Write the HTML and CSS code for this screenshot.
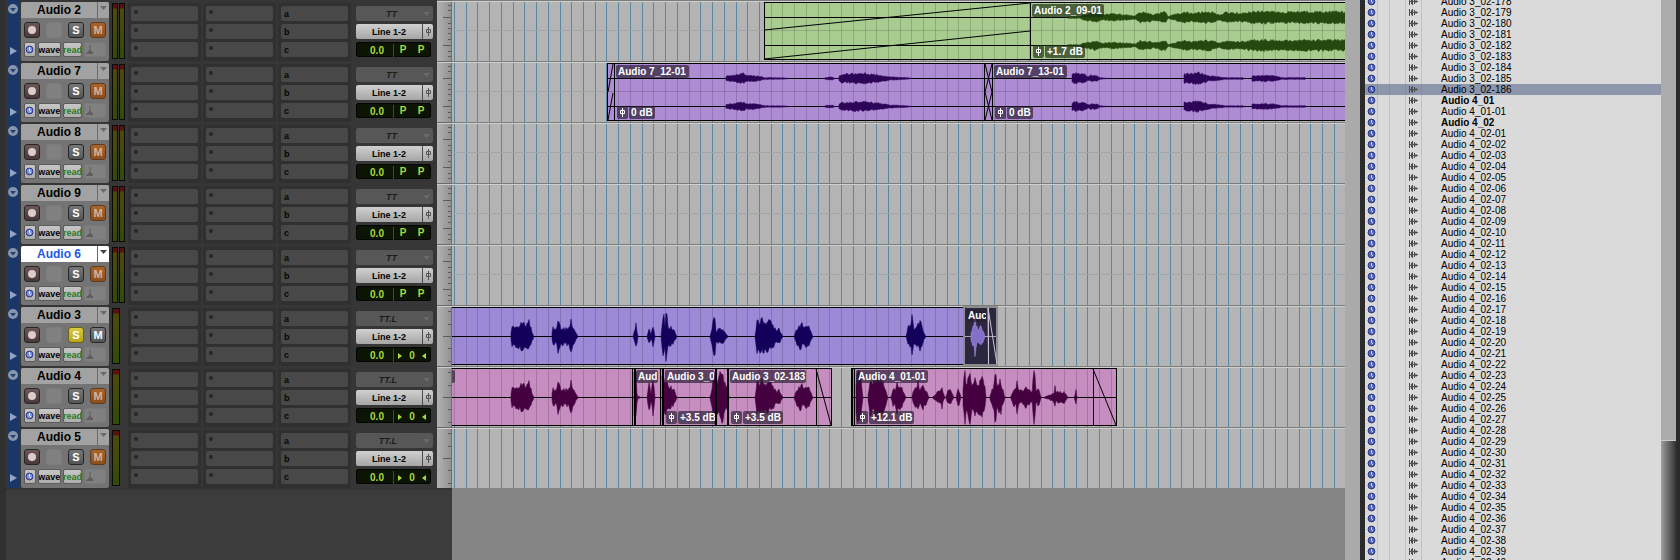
FILE: index.html
```html
<!DOCTYPE html>
<html lang="en">
<head>
<meta charset="utf-8">
<title>Edit window</title>
<link rel="stylesheet" href="styles.css">
</head>
<body>
<div class="app">
  <main class="editor" id="editor"></main>
  <div class="gutter"></div>
  <aside class="clips">
    <ul class="clip-list" id="clip-list"></ul>
    <div class="scroll"><div class="scroll-thumb"></div></div>
  </aside>
</div>
<script src="app.js"></script>
</body>
</html>
```

FILE: styles.css
```css
* { box-sizing: border-box; }
body {
  margin: 0;
  background: #3c3c3c;
  font-family: "Liberation Sans", Arial, sans-serif;
  font-size: 10px;
  color: #000;
}
button {
  font: inherit;
  color: inherit;
  padding: 0;
  border: 0;
  overflow: hidden;
  white-space: nowrap;
}
svg { display: block; flex: none; }
.app { display: flex; height: 100vh; overflow: hidden; }

.editor {
  flex: 1;
  min-width: 0;
  display: flex;
  flex-direction: column;
  border-left: 6px solid #303030;
  background: #3c3c3c;
}
.track { display: flex; flex: none; height: 61px; }
.rest { flex: 1; display: flex; }
.rest-side { width: 446px; background: #3c3c3c; border-top: 2px solid #343434; }
.rest-lane { flex: 1; background: #848484; }

.strip {
  width: 431px;
  display: flex;
  background: #363636;
  padding-left: 1px;
}
.fold {
  width: 12px;
  background: #1b3768;
  display: flex;
  flex-direction: column;
  justify-content: space-between;
  padding: 4px 0;
}
.fold button { background: none; display: block; width: 12px; height: 12px; }

.head {
  width: 88px;
  margin: 2px 0 0 2px;
  background: #747474;
  border-radius: 2px;
  overflow: hidden;
}
.title { display: flex; height: 16px; background: #a2a2a2; }
.name {
  flex: 1;
  background: none;
  font-size: 12px;
  font-weight: bold;
  line-height: 17px;
}
.drop { width: 12px; background: none; border-left: 1px solid #6a6a6a; padding-bottom: 4px; }
.drop svg { margin: 0 auto; }
.selected .title { background: #fff; }
.selected .name { color: #1b58e8; }
.row { display: flex; padding: 4px 3px 0; }
.row-main { justify-content: space-between; }
.row-view { gap: 2px; }
.sq {
  width: 16px;
  height: 16px;
  border-radius: 3px;
  border: 1px solid #262626;
  font-size: 11px;
  font-weight: bold;
  line-height: 14px;
  text-align: center;
}
.rec { background: linear-gradient(#6d5656, #4a3838); display: grid; place-items: center; }
.rec::before { content: ""; width: 8px; height: 8px; border-radius: 50%; background: #dccccc; }
.blank { background: #808080; border-color: #7c7c7c; }
.key { background: linear-gradient(#757878, #535656); color: #fff; }
.solo-on { background: linear-gradient(#d8cc40, #b8a61c); border-color: #6a6216; }
.mute-on { background: linear-gradient(#a8642c, #8c4e1c); border-color: #5f3a1c; color: #d8b394; }
.mini {
  height: 15px;
  border-radius: 2px;
  border: 1px solid #5c5c5c;
  background: linear-gradient(#c6c6c6, #aeaeae);
  font-size: 9px;
  font-weight: bold;
  line-height: 14px;
  display: flex;
  justify-content: center;
}
.mini svg { margin-top: 2px; }
.base { width: 12px; }
.view { width: 23px; }
.auto { width: 20px; color: #2a7a1c; }
.elastic { width: 22px; background: #808080; border-color: #7a7a7a; justify-content: flex-start; }

.meter {
  display: flex;
  gap: 1px;
  align-self: flex-start;
  margin: 3px 1px 0 3px;
  width: 13px;
}
.meter span {
  width: 6px;
  height: 56px;
  border: 1px solid #0c0c06;
  background: linear-gradient(#5a1010 0 4px, #4e4a08 5px, #424a0a 50%, #2f4c08);
}
.mono .meter span { width: 8px; }

.slots {
  width: 73px;
  margin: 3px 0 0 2px;
  padding: 3px 3px 0;
  display: flex;
  flex-direction: column;
  gap: 3px;
  background: #303030;
  font-size: 9px;
  font-weight: bold;
}
.slot {
  height: 15px;
  background: #484848;
  border-radius: 2px;
  text-align: left;
  padding: 0 3px;
  line-height: 17px;
  color: #050505;
}
.slot i { display: block; width: 4px; height: 4px; border-radius: 50%; background: #262626; margin-bottom: 4px; }
.io {
  width: 77px;
  margin: 6px 0 0 5px;
  display: flex;
  flex-direction: column;
  gap: 3px;
  font-size: 9px;
  font-weight: bold;
}
.io > * { height: 15px; border-radius: 2px; }
.input {
  display: flex;
  align-items: center;
  justify-content: flex-end;
  gap: 26px;
  padding-right: 3px;
  background: #575757;
  color: #1c1c1c;
  font-style: italic;
}
.output { display: flex; background: linear-gradient(#d0d0d0, #a6a6a6); line-height: 16px; }
.output span { flex: 1; }
.output svg { border-left: 1px solid #4c4c4c; }
.pan {
  width: 75px;
  background: #0c1406;
  border: 1px solid #050505;
  color: #a6dc3c;
  font-size: 10px;
  line-height: 14px;
  display: grid;
  grid-template-columns: 37px 18px 18px;
  text-align: center;
}
.pan b:first-child { border-right: 1px solid #3c5418; margin: 1px 0; padding-left: 4px; line-height: 13px; }
.pan .center { grid-column: 2 / 4; display: flex; justify-content: space-around; align-items: center; }

.ruler { width: 15px; flex: none; background: linear-gradient(90deg, #b2b2b2, #909090); border-top: 1px solid #6a6a6a; }
.lane {
  flex: 1;
  min-width: 0;
  position: relative;
  overflow: hidden;
  background: #b4b4b4;
}
.lane > svg { position: absolute; left: 0; top: 0; width: 100%; height: 61px; }
.tag {
  position: absolute;
  top: 4px;
  height: 13px;
  padding: 0 2px;
  border-radius: 2px;
  background: rgba(40, 30, 50, 0.68);
  color: #fff;
  font-weight: bold;
  line-height: 13px;
  white-space: nowrap;
  overflow: hidden;
}
.gain { position: absolute; top: 45px; display: flex; gap: 1px; overflow: hidden; }
.gain .tag { position: static; flex: none; }
.fader { width: 11px; border-radius: 2px; background: rgba(40, 30, 50, 0.68); }
.green .tag, .green .fader { background: rgba(30, 45, 20, 0.68); }

.gutter { width: 20px; flex: none; background: linear-gradient(90deg, #aaa 0 15px, #2b2b2b 15px); }
.clips { width: 315px; flex: none; display: flex; border-right: 4px solid #2b2b2b; background: #dadada; }
.clip-list {
  flex: 1;
  margin: -4px 0 0;
  padding: 0;
  list-style: none;
  background: linear-gradient(90deg, transparent 12px, #c2c2c2 12px 13px, transparent 13px 24px, #c2c2c2 24px 25px, transparent 25px 40px, #c2c2c2 40px 41px, transparent 41px 56px, #c2c2c2 56px 57px, transparent 57px);
}
.clip-list li { height: 11px; line-height: 12px; display: flex; align-items: center; padding-left: 2px; }
.clip-list .wave-icon { margin: 0 23px 0 33px; }
.clip-list .whole { font-weight: bold; }
.clip-list .current { background: rgba(80, 95, 135, 0.55); }
.scroll { width: 15px; background: #acacac; display: flex; flex-direction: column; justify-content: flex-end; }
.scroll-thumb { height: 120px; background: linear-gradient(90deg, #a0a0a0, #777 35%, #333); border-top: 1px solid #ccc; }
```

FILE: app.js
```js
const LANE_X = 452;

const audio3Wave = [
  [[511,4],[512,12],[514,10],[517,14],[520,14],[523,17],[526,13],[527,15],[528,22],[530,13],[534,0]],
  [[552,4],[553,12],[556,8],[558,18],[561,9],[563,11],[565,8],[568,11],[571,18],[573,11],[578,0]],
  [[633,0],[635,10],[636,15],[638,0]],
  [[647,0],[649,9],[651,3],[653,12],[655,0]],
  [[661,0],[663,28],[664,26],[665,12],[666,28],[667,24],[668,12],[672,10],[674,7],[677,0]],
  [[710,0],[713,16],[714,28],[715,22],[716,7],[720,9],[724,7],[728,0]],
  [[755,0],[757,20],[760,18],[763,20],[767,18],[771,17],[774,12],[777,8],[779,10],[783,0]],
  [[794,0],[797,10],[801,16],[803,12],[808,13],[813,0]],
  [[906,0],[908,10],[911,15],[912,24],[914,11],[916,9],[920,19],[923,7],[926,0]]
];
const audio4Wave = [
  audio3Wave[0], audio3Wave[1],
  [[634,30],[636,28],[637,6],[638,1],[640,1]],
  [[647,0],[649,18],[651,5],[653,22],[655,0]],
  [[662,30],[664,22],[668,15],[672,11],[674,9],[677,0]],
  [[710,0],[713,18],[715,32],[718,18],[720,28],[722,30],[724,20],[728,12],[729,0]],
  audio3Wave[6], audio3Wave[7],
  [[856,16],[857,34],[859,34],[861,22],[863,0]],
  [[868,3],[870,24],[872,16],[875,22],[879,24],[883,22],[885,12],[888,0]],
  [[891,1],[893,10],[895,9],[897,18],[901,14],[906,0]],
  [[912,1],[914,12],[917,10],[918,20],[920,8],[923,14],[926,9],[929,0]],
  [[933,1],[938,7],[941,8],[942,13],[943,6],[945,0]],
  [[946,1],[948,8],[950,10],[954,0]],
  [[956,0],[958,13],[961,0]],
  [[963,10],[965,34],[966,18],[968,22],[970,30],[972,18],[975,20],[978,18],[982,22],[985,14],[986,0]],
  [[990,2],[993,12],[995,30],[996,28],[997,14],[999,20],[1001,18],[1005,0]],
  [[1011,2],[1014,11],[1016,12],[1017,19],[1019,9],[1022,8],[1026,13],[1030,8],[1032,7]],
  [[1032,4],[1033,22],[1034,36],[1035,26],[1036,8],[1039,10],[1041,0]],
  [[1045,1],[1052,4],[1054,6],[1055,12],[1056,6],[1064,7],[1068,0]],
  [[1074,0],[1076,8],[1077,0]]
];
const audio7Wave = [
  [[726,3],[735,4],[743,6],[746,4],[758,3],[765,1],[783,1],[790,0]],
  [[825,1],[832,2],[835,0]],
  [[839,3],[842,5],[855,6],[866,6],[880,4],[890,2],[907,1],[912,0]],
  [[1072,5],[1075,6],[1085,5],[1088,2],[1091,4],[1097,3],[1100,1],[1108,0]],
  [[1184,5],[1190,6],[1198,7],[1210,3],[1220,2],[1225,1],[1243,1]],
  [[1252,3],[1265,4],[1275,3],[1282,1],[1305,1]]
];
const audio2Wave = [[[1068,1],[1080,1],[1083,3],[1088,4],[1095,6],[1102,3],[1110,4],[1120,4],[1135,2],[1140,6],[1150,5],[1154,3],[1162,7],[1166,6],[1168,1],[1178,5],[1186,6],[1192,5],[1210,7],[1219,3],[1226,6],[1240,5],[1262,8],[1280,6],[1300,7],[1320,7],[1345,7],[2400,7]]];

const C = { green: ["#a8cc90", "#24480e"], violet: ["#ae8cd4", "#2c0558"], blue: ["#9c8ad6", "#12005a"], pink: ["#c68ec0", "#450040"] };

const tracks = [
  { name: "Audio 2", stereo: 1, color: "green", waves: audio2Wave,
    clips: [[764, 2400]], cuts: [1030],
    fades: [[764,30,1030,3],[764,59,1030,31]],
    tags: [[1032, 72, "Audio 2_09-01"]], gains: [[1033, 60, "+1.7 dB"]] },
  { name: "Audio 7", stereo: 1, color: "violet", waves: audio7Wave,
    clips: [[607, 2400]], cuts: [614, 984, 992],
    fades: [[608,31,613,3],[608,59,613,32],[985,3,992,31],[992,3,985,31],[985,31,992,59],[992,31,985,59]],
    tags: [[616, 73, "Audio 7_12-01"], [994, 73, "Audio 7_13-01"]],
    gains: [[617, 60, "0 dB"], [995, 60, "0 dB"]] },
  { name: "Audio 8", stereo: 1 },
  { name: "Audio 9", stereo: 1 },
  { name: "Audio 6", stereo: 1, selected: 1 },
  { name: "Audio 3", solo: 1, color: "blue", waves: audio3Wave,
    clips: [[440, 963]], picked: 1, tags: [[966, 20, "Auc"]] },
  { name: "Audio 4", solo: 0, color: "pink", waves: audio4Wave,
    clips: [[440, 831], [851, 1116]], cuts: [632, 634, 635, 660, 662, 663, 715, 716, 727, 728, 816, 852, 854, 1093],
    fades: [[816,3,831,59],[1093,3,1116,59]],
    tags: [[451, 3, ""], [636, 22, "Aud"], [665, 49, "Audio 3_0"], [730, 76, "Audio 3_02-183"], [856, 72, "Audio 4_01-01"]],
    gains: [[666, 49, "+3.5 dB"], [731, 60, "+3.5 dB"], [857, 62, "+12.1 dB"]] },
  { name: "Audio 5" }
];

/* Small deterministic ripple so that envelopes look like sampled audio. */
function ripple(x, k) {
  const s = Math.sin(x * 12.9898 + k * 78.233) * 43758.5453;
  return 0.6 + 0.4 * (s - Math.floor(s));
}

function wavePath(points, mid, limit, scale, k) {
  const top = [], bottom = [];
  const end = points[points.length - 1][0];
  let i = 0;
  for (let x = points[0][0]; x <= end; x++) {
    while (i < points.length - 2 && x > points[i + 1][0]) i++;
    const [x0, a0] = points[i], [x1, a1] = points[i + 1];
    const amp = (a0 + (a1 - a0) * (x - x0) / (x1 - x0)) * scale;
    top.push(`${x} ${(mid - Math.min(limit, amp * ripple(x, k))).toFixed(1)}`);
    bottom.unshift(`${x} ${(mid + Math.min(limit, amp * ripple(x, k + 1) * 0.95)).toFixed(1)}`);
  }
  return `M${top.join("L")}L${bottom.join("L")}Z`;
}

function vline(x, y0, y1) { return `M${x + 0.5} ${y0}V${y1}`; }

function gridPath(x0, x1) {
  let d = "";
  for (let i = 0; i < 180; i++) {
    const x = 454 + Math.round(i * 11.73);
    if (x > x0 && x < x1) d += vline(x, 2, 61);
  }
  return d;
}

function laneSvg(t) {
  let s = `<path d="M452 .5H2600" stroke="#7c7c7c"/><path d="M452 1.5H2600" stroke="#cecece"/><path d="${gridPath(452, 2600)}" stroke="#5b86a2"/>`;
  if (t.stereo) s += `<path d="M452 30.5H2600" stroke="#a5a5a5"/>`;
  if (t.color) {
    const [fill, ink] = C[t.color];
    const mids = t.stereo ? [17, 45] : [31];
    for (const [a, b] of t.clips) {
      s += `<rect x="${a + 0.5}" y="2.5" width="${b - a}" height="57" fill="${fill}" stroke="#000"/>`;
      s += `<path d="${gridPath(a, b)}" stroke="#000" stroke-opacity=".16"/>`;
      if (t.stereo) s += `<path d="M${a + 1} 30.5H${b}" stroke="#000" stroke-opacity=".15"/>`;
      for (const m of mids) s += `<path d="M${a} ${m + 0.5}H${b}" stroke="#000"/>`;
    }
    mids.forEach((m, k) => {
      for (const w of t.waves) s += `<path d="${wavePath(w, m + 0.5, t.stereo ? 11 : 27, k ? 0.9 : 1, k)}" fill="${ink}" stroke="${ink}" stroke-width=".5"/>`;
    });
    s += `<path d="${(t.cuts || []).map(x => vline(x, 2, 60)).join("")}" stroke="#000"/>`;
    s += `<path d="${(t.fades || []).map(f => `M${f[0]} ${f[1]}L${f[2]} ${f[3]}`).join("")}" stroke="#000" stroke-width="1" fill="none"/>`;
  }
  if (t.picked) {
    s += `<rect x="964" y="2" width="33" height="58" fill="#2c2740" stroke="#8c8c8c" stroke-width="2"/>
      <path d="M965 31.5H996" stroke="#a9a4b8"/><path d="M988.5 3V59L988 3L997 59" stroke="#c8c5d0" fill="none"/>
      <path d="${wavePath([[971,4],[973,11],[974,13],[975,24],[976,14],[978,7],[979,9],[981,12],[983,8],[985,0]], 31.5, 27, 1, 3)}" fill="#8271c6" stroke="#a598e0" stroke-width=".5"/>`;
  }
  return `<svg aria-hidden="true"><g transform="translate(-${LANE_X} 0)">${s}</g></svg>`;
}

const faderMark = `<svg class="fader" width="11" height="13" viewBox="0 0 11 13"><path d="M5.5 2V11M3.5 4.5H7.5V7.5H3.5Z" stroke="#fff" fill="#4a4050"/></svg>`;

function laneHtml(t) {
  const tags = (t.tags || []).map(([x, w, text]) => `<span class="tag" style="left:${x - LANE_X}px;width:${w}px">${text}</span>`).join("");
  const gains = (t.gains || []).map(([x, w, text]) => `<div class="gain" style="left:${x - LANE_X}px;width:${w}px">${faderMark}<span class="tag">${text}</span></div>`).join("");
  return `<div class="lane ${t.color || ""}">${laneSvg(t)}${tags}${gains}</div>`;
}

function rulerSvg(t) {
  const long = t.stereo ? [17, 45] : [31];
  const short = t.stereo ? [5, 10, 23, 28, 33, 39, 51, 56] : [6, 19, 43, 56];
  const d = long.map(y => `M6 ${y - 0.5}H14`).concat(short.map(y => `M11 ${y - 0.5}H14`)).join("");
  return `<div class="ruler"><svg width="15" height="60"><path d="M14.5 0V60" stroke="#6e6e6e"/><path d="${d}" stroke="#5c5c5c"/><path d="M0 .5H15" stroke="#ccc"/></svg></div>`;
}

const clock = (size, face, hand) => `<svg width="${size}" height="${size}" viewBox="0 0 9 9"><circle cx="4.5" cy="4.5" r="3.4" fill="${face}" stroke="#28327c"/><path d="M4.5 2.2V4.7L6 6" stroke="${hand}" stroke-width=".9" fill="none"/></svg>`;
const down = (color) => `<svg width="7" height="4" viewBox="0 0 7 4"><path d="M0 0H7L3.5 4Z" fill="${color}"/></svg>`;

function trackHtml(t) {
  const slots = (label, items) => `<div class="slots">${items.map((c, i) => `<button class="slot" aria-label="${label} ${i + 1}">${c}</button>`).join("")}</div>`;
  const dots = ["<i></i>", "<i></i>", "<i></i>"];
  const unmuted = t.solo === 1;
  const pan = t.stereo
    ? `<b>P</b><b>P</b>`
    : `<b class="center"><svg width="4" height="6"><path d="M0 0L4 3L0 6Z" fill="#a6dc3c"/></svg>0<svg width="4" height="6"><path d="M4 0L0 3L4 6Z" fill="#a6dc3c"/></svg></b>`;
  return `<section class="track ${t.stereo ? "" : "mono"} ${t.selected ? "selected" : ""}">
    <div class="strip">
      <div class="fold">
        <button aria-label="Track options"><svg width="12" height="12"><circle cx="6" cy="5" r="5" fill="#8795ad"/><path d="M3 4H9L6 7.500Z" fill="#26406e"/></svg></button>
        <button aria-label="Show automation"><svg width="12" height="12"><path d="M3 2L10 6L3 10Z" fill="#93a5c4"/></svg></button>
      </div>
      <div class="head">
        <div class="title"><button class="name">${t.name}</button><button class="drop" aria-label="Playlist">${down(t.selected ? "#444" : "#6a6a6a")}</button></div>
        <div class="row row-main">
          <button class="sq rec" aria-label="Record"></button><button class="sq blank" aria-label="Input monitor"></button>
          <button class="sq key ${t.solo ? "solo-on" : ""}">S</button><button class="sq key ${unmuted ? "" : "mute-on"}">M</button>
        </div>
        <div class="row row-view">
          <button class="mini base" aria-label="Timebase">${clock(9, "#7d93e6", "#fff")}</button><button class="mini view">wave</button>
          <button class="mini auto">read</button><button class="mini elastic" aria-label="Elastic audio"><svg width="10" height="10"><path d="M5 0V6M1 8.500H8M2 8L5 5L8 8Z" stroke="#5e5e5e" fill="#5e5e5e"/></svg></button>
        </div>
      </div>
      <div class="meter">${t.stereo ? "<span></span><span></span>" : "<span></span>"}</div>
      ${slots("Insert A", dots)}${slots("Insert F", dots)}${slots("Send", ["a", "b", "c"])}
      <div class="io">
        <button class="input">${t.stereo ? "TT" : "TT.L"}${down("#6a6a6a")}</button>
        <button class="output"><span>Line 1-2</span><svg width="11" height="15"><path d="M5.500 3V12M3.500 5.500H7.500V8.500H3.500Z" stroke="#555" fill="#bbb"/></svg></button>
        <div class="pan"><b>0.0</b>${pan}</div>
      </div>
    </div>
    ${rulerSvg(t)}${laneHtml(t)}
  </section>`;
}

document.getElementById("editor").innerHTML =
  tracks.map(trackHtml).join("") + `<div class="rest"><div class="rest-side"></div><div class="rest-lane"></div></div>`;

const names = [];
for (let n = 178; n <= 186; n++) names.push("Audio 3_02-" + n);
names.push("Audio 4_01", "Audio 4_01-01", "Audio 4_02");
for (let n = 1; n <= 40; n++) names.push("Audio 4_02-" + String(n).padStart(2, "0"));

document.getElementById("clip-list").innerHTML = names.map(n => {
  const cls = n.endsWith("186") ? "current" : n.length === 10 ? "whole" : "";
  return `<li class="${cls}">${clock(9, "#5468c0", "#dfe6ff")}<svg class="wave-icon" width="9" height="9"><path d="M0 4.500H9" stroke="#555"/><path d="M.5 1V8M2.500 2V7M3.500 1V8M5.500 2V7M7 3V6" stroke="#4c4c4c"/></svg>${n}</li>`;
}).join("");
```
